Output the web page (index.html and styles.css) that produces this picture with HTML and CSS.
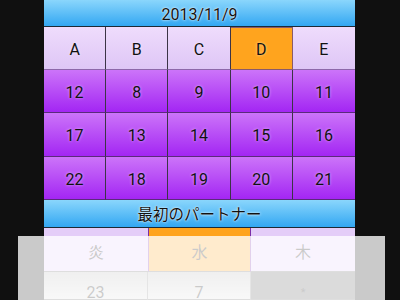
FILE: index.html
```html
<!DOCTYPE html>
<html>
<head>
<meta charset="utf-8">
<link rel="stylesheet" href="styles.css">
</head>
<body>
<div class="screen">
  <div class="panel">
    <div class="bar">2013/11/9</div>
    <div class="grid">
      <div class="cell head">A</div>
      <div class="cell head">B</div>
      <div class="cell head">C</div>
      <div class="cell head on">D</div>
      <div class="cell head last">E</div>
      <div class="cell num">12</div>
      <div class="cell num">8</div>
      <div class="cell num">9</div>
      <div class="cell num">10</div>
      <div class="cell num last">11</div>
      <div class="cell num tall">17</div>
      <div class="cell num tall">13</div>
      <div class="cell num tall">14</div>
      <div class="cell num tall">15</div>
      <div class="cell num tall last">16</div>
      <div class="cell num">22</div>
      <div class="cell num">18</div>
      <div class="cell num">19</div>
      <div class="cell num">20</div>
      <div class="cell num last">21</div>
    </div>
    <div class="bar sub">最初のパートナー</div>
    <div class="lower">
      <div class="lc lav">炎</div>
      <div class="lc sel">水</div>
      <div class="lc lav">木</div>
      <div class="lc wt">23</div>
      <div class="lc wt">7</div>
      <div class="lc gr"><span class="star">*</span></div>
    </div>
  </div>
  <div class="fade"></div>
</div>
</body>
</html>
```

FILE: styles.css
```css
html, body {
  margin: 0;
  padding: 0;
  background: #101010;
}
.screen {
  position: relative;
  width: 400px;
  height: 300px;
  overflow: hidden;
  background: #101010;
  font-family: Roboto, "Noto Sans CJK JP", sans-serif;
  color: #111;
}
.panel {
  margin-left: 44px;
  width: 311px;
}
.bar {
  box-sizing: border-box;
  height: 27px;
  border-bottom: 1px solid #1d2a35;
  background: linear-gradient(#8ad6fc, #33a7f2);
  text-align: center;
  font-size: 16px;
  line-height: 29px;
  text-shadow: 0 0 3px rgba(255,255,255,0.9), 0 0 1px rgba(255,255,255,0.9);
}
.bar.sub {
  height: 28px;
  line-height: 30px;
  font-size: 15.5px;
}
.grid {
  display: grid;
  grid-template-columns: repeat(5, 1fr);
  grid-template-rows: 43px 43px 44px 43px;
}
.cell {
  box-sizing: border-box;
  display: flex;
  align-items: center;
  justify-content: center;
  padding-top: 2px;
  font-size: 16px;
  border-right: 1px solid #3c3446;
  border-bottom: 1px solid #5b2a7c;
  text-shadow: 0 0 3px rgba(255,255,255,0.6);
}
.cell.last { border-right: none; }
.cell.head {
  background: linear-gradient(#efdcfc, #dec6f6);
  border-bottom-color: #8d68aa;
}
.cell.head.on {
  background: #ffa41e;
  border: 1px solid #8a5a6a;
  border-left: none;
}
.cell.num {
  background: linear-gradient(#cc74f9, #a326f3);
}
.lower {
  display: grid;
  grid-template-columns: 104px 103px 104px;
  grid-template-rows: 44px 28px;
}
.lc {
  box-sizing: border-box;
  display: flex;
  align-items: center;
  justify-content: center;
  font-size: 16px;
  color: #111;
  border-bottom: 1px solid #6a6a6a;
}
.lc.lav { background: #e4cdf8; padding-top: 2px; }
.lc.sel {
  background: #ffa31c;
  padding-top: 2px;
  border-left: 1px solid #7a2ea8;
  border-right: 1px solid #7a2ea8;
}
.lc.wt {
  background: linear-gradient(#b8b8b8, #e0e0e0);
  border-right: 1px solid #8a8a8a;
  padding-top: 14px;
}
.lc.gr {
  background: #5c5c5c;
  padding-top: 14px;
}
.star { font-size: 11px; }
.fade {
  position: absolute;
  left: 18px;
  top: 236px;
  width: 367px;
  height: 64px;
  background: rgba(255,255,255,0.78);
}
```
